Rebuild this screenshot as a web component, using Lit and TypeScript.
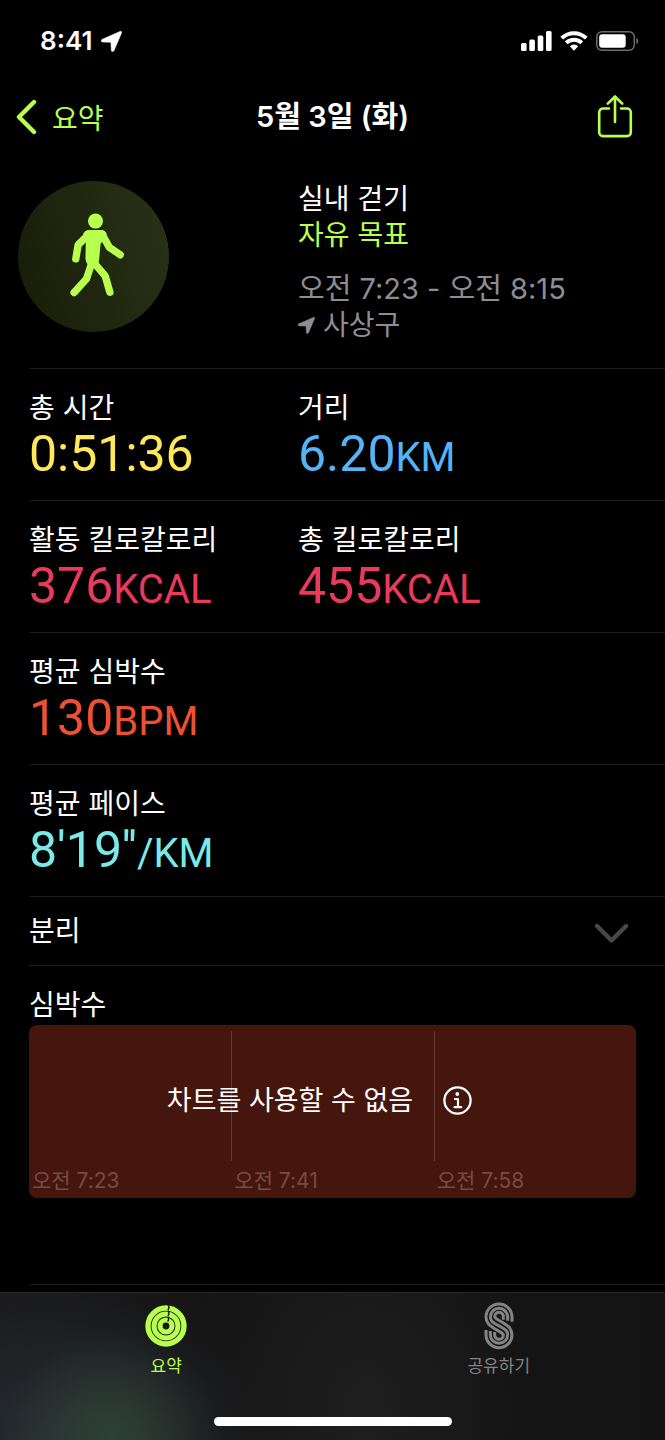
import { LitElement, html, css, svg } from "lit";
import { customElement, property } from "lit/decorators.js";

interface Metric {
  label: string;
  value: string;
  unit: string;
  tone: string;
}

const METRIC_ROWS: Metric[][] = [
  [
    { label: "총 시간", value: "0:51:36", unit: "", tone: "time" },
    { label: "거리", value: "6.20", unit: "KM", tone: "distance" },
  ],
  [
    { label: "활동 킬로칼로리", value: "376", unit: "KCAL", tone: "energy" },
    { label: "총 킬로칼로리", value: "455", unit: "KCAL", tone: "energy" },
  ],
  [{ label: "평균 심박수", value: "130", unit: "BPM", tone: "heart" }],
  [{ label: "평균 페이스", value: "8'19''", unit: "/KM", tone: "pace" }],
];

const CHART_TIMES = ["오전 7:23", "오전 7:41", "오전 7:58"];

const arrowShape = svg`<path d="M1 8.400 19 .5c1.200-.5 2 .3 1.500 1.500L13 19.600c-.7 1.500-2.600 1.300-2.700-.3l-.3-7.300c0-.5-.3-.8-.8-.8l-7.400-.2C-.1 10.900-.3 9 1 8.400Z" fill="currentColor" stroke="currentColor" stroke-width=".6"/>`;

@customElement("status-bar")
class StatusBar extends LitElement {
  static styles = css`
    :host {
      display: flex;
      align-items: center;
      justify-content: space-between;
      height: 82px;
      padding: 0 26px 0 40px;
      color: #fff;
    }
    .clock,
    .signals {
      display: flex;
      align-items: center;
    }
    .clock {
      gap: 9px;
      font-size: 26px;
      line-height: 32px;
      font-weight: 600;
    }
    .signals {
      gap: 8px;
    }
    svg {
      display: block;
    }
  `;

  render() {
    return html`
      <div class="clock">
        <span>8:41</span>
        <svg width="21" height="21" viewBox="0 0 21 21" aria-hidden="true">${arrowShape}</svg>
      </div>
      <div class="signals">
        <svg width="31" height="20" viewBox="0 0 31 20" fill="#fff" aria-hidden="true">
          <rect x="0" y="12" width="5.600" height="8" rx="1.500" />
          <rect x="8.300" y="8.500" width="5.600" height="11.500" rx="1.500" />
          <rect x="16.700" y="4.500" width="5.600" height="15.500" rx="1.500" />
          <rect x="25" y="0" width="5.600" height="20" rx="1.500" />
        </svg>
        <svg width="28" height="20" viewBox="0 0 28 20" aria-hidden="true">
          <g fill="none" stroke="#fff" stroke-width="3.900">
            <path d="M1.700 7.200a17.600 17.600 0 0 1 24.600 0" />
            <path d="M6.200 11.900a11.200 11.200 0 0 1 15.600 0" />
          </g>
          <path d="M9.800 15.200a6.200 6.200 0 0 1 8.400 0L14 19.700Z" fill="#fff" />
        </svg>
        <svg width="43" height="20" viewBox="0 0 43 20" aria-hidden="true">
          <rect x=".8" y=".8" width="37.500" height="18.400" rx="5.200" fill="none" stroke="#6c6c6c" stroke-width="1.500" />
          <rect x="3.200" y="3.200" width="26.500" height="13.600" rx="3" fill="#fff" />
          <path d="M40.300 6.700c2.600 1.300 2.600 5.300 0 6.600Z" fill="#6c6c6c" />
        </svg>
      </div>
    `;
  }
}

@customElement("nav-header")
class NavHeader extends LitElement {
  static styles = css`
    :host {
      display: grid;
      grid-template-columns: 1fr auto 1fr;
      align-items: center;
      height: 70px;
      padding: 0 16px;
      box-sizing: border-box;
    }
    button {
      margin: 0;
      padding: 0;
      border: 0;
      background: none;
      color: #b8ff4e;
      font: inherit;
      cursor: pointer;
    }
    .back {
      display: flex;
      align-items: center;
      gap: 15px;
      justify-self: start;
    }
    .title {
      margin: 0;
      font-size: 29px;
      line-height: 36px;
      font-weight: 600;
      color: #fff;
    }
    .share {
      justify-self: end;
      padding-right: 16px;
    }
    svg {
      display: block;
    }
  `;

  render() {
    return html`
      <button class="back" type="button">
        <svg width="21" height="36" viewBox="0 0 21 36" fill="none" stroke="currentColor" stroke-width="4.400" stroke-linecap="round" stroke-linejoin="round" aria-hidden="true">
          <path d="M18 3 3 18l15 15" />
        </svg>
        <span>요약</span>
      </button>
      <h1 class="title">5월 3일 (화)</h1>
      <button class="share" type="button" aria-label="공유">
        <svg width="36" height="44" viewBox="0 0 36 44" fill="none" stroke="currentColor" stroke-width="2.600" stroke-linecap="round" stroke-linejoin="round" aria-hidden="true">
          <path d="M12 13.500H6A3.800 3.800 0 0 0 2.200 17.300v20A3.800 3.800 0 0 0 6 41.100h24a3.800 3.800 0 0 0 3.800-3.800v-20A3.800 3.800 0 0 0 30 13.500h-6" />
          <path d="M18 27V2M10.800 8.700 18 1.500l7.200 7.200" />
        </svg>
      </button>
    `;
  }
}

@customElement("workout-intro")
class WorkoutIntro extends LitElement {
  static styles = css`
    :host {
      display: grid;
      grid-template-columns: 280px 1fr;
      padding: 29px 18px 25px;
      line-height: 36px;
    }
    .badge {
      display: block;
      width: 151px;
      height: 151px;
      border-radius: 50%;
      background: linear-gradient(75deg, #181c08, #20270f 50%, #293318);
    }
    .name,
    .goal,
    .when,
    .where {
      margin: 0;
    }
    .name {
      color: #fff;
    }
    .goal {
      margin-bottom: 18px;
      color: #b8ff4e;
    }
    .when,
    .where {
      color: #8d8d93;
    }
    .when {
      font-size: 29px;
    }
    .where {
      display: flex;
      align-items: center;
      gap: 8px;
    }
  `;

  render() {
    return html`
      <div>
        <svg class="badge" viewBox="54 48 452 452" aria-hidden="true">
          <g fill="none" stroke="#b8ff4e" stroke-width="22" stroke-linecap="round" stroke-linejoin="round">
            <path d="M264 209 234 239l-7 42" />
            <path d="M306 208l21 38 33 23" />
            <path d="M274 296l-15 45-37 41" />
            <path d="M286 298l29 34 14 49" />
          </g>
          <circle cx="286" cy="168" r="22.500" fill="#b8ff4e" />
          <path d="M266 195h38c8 0 13 5 16 12l-19 30-4 45c-1 14-8 24-17 26-11-1-23-12-24-27l1-56-8-18c4-8 9-12 17-12Z" fill="#b8ff4e" />
        </svg>
      </div>
      <div>
        <p class="name">실내 걷기</p>
        <p class="goal">자유 목표</p>
        <p class="when">오전 7:23 - 오전 8:15</p>
        <p class="where">
          <svg width="17" height="17" viewBox="0 0 21 21" aria-hidden="true">${arrowShape}</svg>
          <span>사상구</span>
        </p>
      </div>
    `;
  }
}

@customElement("metric-row")
class MetricRow extends LitElement {
  @property({ attribute: false }) metrics: Metric[] = [];

  static styles = css`
    :host {
      display: grid;
      grid-template-columns: 269px 1fr;
      padding: 21px 0 18px;
      border-top: 1px solid #1c1c1e;
    }
    .label {
      margin: 0;
      line-height: 36px;
      color: #fff;
    }
    .value {
      margin: 0;
      font-family: Roboto, "Noto Sans CJK KR", sans-serif;
      font-size: 50px;
      line-height: 56px;
    }
    .unit {
      font-size: 40px;
      line-height: 40px;
    }
    .time {
      color: #ffe75a;
    }
    .distance {
      color: #55b3f8;
    }
    .energy {
      color: #e93a5b;
    }
    .heart {
      color: #ed5033;
    }
    .pace {
      color: #7ce9e9;
    }
  `;

  render() {
    return this.metrics.map(
      (m) => html`
        <div>
          <p class="label">${m.label}</p>
          <p class="value ${m.tone}">${m.value}<span class="unit">${m.unit}</span></p>
        </div>
      `
    );
  }
}

@customElement("heart-chart")
class HeartChart extends LitElement {
  static styles = css`
    :host {
      display: block;
      padding: 21px 29px 86px 0;
      border-top: 1px solid #1c1c1e;
    }
    .heading {
      margin: 0 0 2px;
      font-size: inherit;
      font-weight: 400;
      line-height: 36px;
      color: #fff;
    }
    .chart {
      display: grid;
      border-radius: 8px;
      background: #45160e;
    }
    .slots,
    .message {
      grid-area: 1 / 1;
    }
    .slots {
      display: grid;
      grid-template-columns: repeat(3, 1fr);
      padding-top: 6px;
    }
    .plot {
      height: 130px;
      border-left: 1px solid #66382f;
    }
    .slot:first-child .plot {
      border-color: transparent;
    }
    .time {
      display: block;
      padding: 6px 3px 3px;
      font-size: 21px;
      line-height: 28px;
      color: #7a4a41;
    }
    .message {
      display: flex;
      align-items: center;
      justify-content: center;
      gap: 30px;
      margin-bottom: 22px;
      padding-right: 26px;
      font-size: 27px;
      line-height: 36px;
      color: #fff;
    }
    .info {
      padding: 0;
      border: 0;
      background: none;
      color: inherit;
      cursor: pointer;
    }
    svg {
      display: block;
    }
  `;

  render() {
    return html`
      <h2 class="heading">심박수</h2>
      <div class="chart">
        <div class="slots">
          ${CHART_TIMES.map(
            (t) => html`<div class="slot"><div class="plot"></div><span class="time">${t}</span></div>`
          )}
        </div>
        <div class="message">
          <span>차트를 사용할 수 없음</span>
          <button class="info" type="button" aria-label="정보">
            <svg width="29" height="29" viewBox="0 0 29 29" fill="none" stroke="currentColor" stroke-linecap="round" stroke-linejoin="round" aria-hidden="true">
              <circle cx="14.500" cy="14.500" r="13.100" stroke-width="2.300" />
              <circle cx="14.300" cy="8" r="1.900" fill="currentColor" stroke="none" />
              <path d="M12 13h3v8M11.500 21.200h6.700" stroke-width="2.200" />
            </svg>
          </button>
        </div>
      </div>
    `;
  }
}

@customElement("tab-bar")
class TabBar extends LitElement {
  static styles = css`
    :host {
      display: block;
      position: sticky;
      bottom: 0;
      border-top: 1px solid #29292a;
      background:
        radial-gradient(110px 110px at 112px 100%, #2e4236, transparent),
        radial-gradient(200px 150px at 60px 100%, #272c32, transparent),
        radial-gradient(180px 240px at 365px 80%, #1f1f1f, transparent),
        linear-gradient(90deg, #1b1b1c, #141415 40%, #131313);
    }
    .tabs {
      display: grid;
      grid-template-columns: 1fr 1fr;
      padding-top: 8px;
      height: 112px;
      box-sizing: border-box;
    }
    .tab {
      display: flex;
      flex-direction: column;
      align-items: center;
      gap: 3px;
      color: #838383;
      font-size: 17px;
      line-height: 24px;
      text-decoration: none;
    }
    .active {
      color: #b8ff4e;
    }
    .icon {
      display: block;
      width: 50px;
      height: 50px;
    }
    .home {
      width: 238px;
      height: 9px;
      margin: 12px auto 14px;
      border-radius: 5px;
      background: #fff;
    }
  `;

  render() {
    return html`
      <nav class="tabs">
        <a class="tab active" href="#summary" aria-current="page">
          <svg class="icon" viewBox="65 62 150 150" fill="none" aria-hidden="true">
            <g stroke="currentColor">
              <circle cx="140" cy="137" r="54" stroke-width="16" />
              <circle cx="140" cy="137" r="36" stroke-width="15" />
              <circle cx="140" cy="137" r="18" stroke-width="15.500" />
            </g>
            <g stroke="#1a1d1d" stroke-width="4">
              <path d="M146 73q6 8 0 17" />
              <path d="M146 91q6 8 0 16" />
              <path d="M145 109q6 7 0 15" />
            </g>
          </svg>
          <span>요약</span>
        </a>
        <a class="tab" href="#sharing">
          <svg class="icon" viewBox="70 62 150 150" fill="none" stroke="currentColor" stroke-width="9" aria-hidden="true">
            <path d="M184 124V110A39 39 0 0 0 106 110C106 128 117 136 133 146L147 154Q158 160 158 165A13 13 0 0 1 132 163V155" />
            <path d="M171 121V110A26 26 0 0 0 119 110C119 123 128 127 145 136.500S171 150 171 163A26 26 0 0 1 119 163V152" />
            <path d="M158 118V110A13 13 0 0 0 132 108Q132 113 143 119L157 127C173 137 184 145 184 163A39 39 0 0 1 106 163V149" />
          </svg>
          <span>공유하기</span>
        </a>
      </nav>
      <div class="home"></div>
    `;
  }
}

@customElement("app-root")
class AppRoot extends LitElement {
  static styles = css`
    :host {
      display: flex;
      flex-direction: column;
      min-height: 100vh;
      background: #000;
      color: #fff;
      font-family: Inter, "Noto Sans CJK KR", sans-serif;
      font-size: 28px;
    }
    .content {
      flex: 1;
    }
    .details {
      margin-left: 29px;
      border-bottom: 1px solid #1c1c1e;
    }
    .splits {
      display: flex;
      align-items: center;
      justify-content: space-between;
      width: 100%;
      padding: 16px 36px 16px 0;
      border: 0;
      border-top: 1px solid #1c1c1e;
      background: none;
      color: #fff;
      font: inherit;
      line-height: 36px;
      text-align: left;
      cursor: pointer;
    }
  `;

  render() {
    return html`
      <status-bar></status-bar>
      <nav-header></nav-header>
      <main class="content">
        <workout-intro></workout-intro>
        <div class="details">
          ${METRIC_ROWS.map((row) => html`<metric-row .metrics=${row}></metric-row>`)}
          <button class="splits" type="button" aria-expanded="false">
            <span>분리</span>
            <svg width="35" height="26" viewBox="0 0 35 26" fill="none" stroke="#48484a" stroke-width="4.400" stroke-linecap="round" stroke-linejoin="round" aria-hidden="true">
              <path d="M3 8l14.500 14.500L32 8" />
            </svg>
          </button>
          <heart-chart></heart-chart>
        </div>
      </main>
      <tab-bar></tab-bar>
    `;
  }
}
